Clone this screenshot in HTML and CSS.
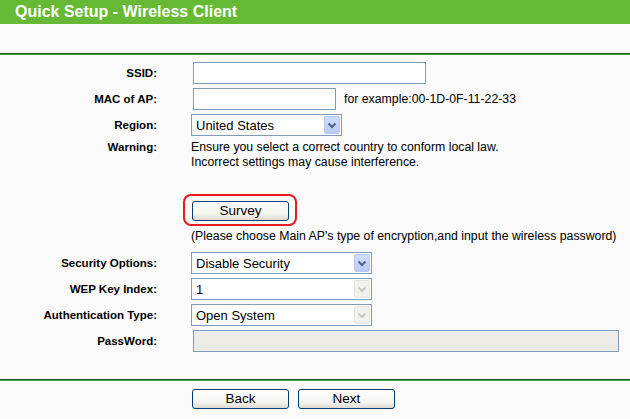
FILE: index.html
```html
<!DOCTYPE html>
<html>
<head>
<meta charset="utf-8">
<link rel="stylesheet" href="styles.css">
</head>
<body>
<div class="header">Quick Setup - Wireless Client</div>
<div class="top-space"></div>
<div class="rule"></div>
<div class="form">
  <div class="row">
    <div class="label">SSID:</div>
    <div class="field"><input class="text ssid" type="text"></div>
  </div>
  <div class="row">
    <div class="label">MAC of AP:</div>
    <div class="field"><input class="text mac" type="text"><span class="hint">for example:00-1D-0F-11-22-33</span></div>
  </div>
  <div class="row">
    <div class="label">Region:</div>
    <div class="field">
      <div class="select region"><span class="value">United States</span><span class="arrow"><svg width="16" height="18" viewBox="0 0 16 18"><path d="M4.5 7.5 L8 11 L11.5 7.5" fill="none" stroke="#4d6185" stroke-width="2"/></svg></span></div>
    </div>
  </div>
  <div class="row warning-row">
    <div class="label">Warning:</div>
    <div class="field warning">Ensure you select a correct country to conform local law.<br>Incorrect settings may cause interference.</div>
  </div>
  <div class="row survey-row">
    <div class="label"></div>
    <div class="field">
      <div class="highlight"><button class="btn">Survey</button></div>
    </div>
  </div>
  <div class="row note-row">
    <div class="label"></div>
    <div class="field note">(Please choose Main AP's type of encryption,and input the wireless password)</div>
  </div>
  <div class="row">
    <div class="label">Security Options:</div>
    <div class="field">
      <div class="select wide"><span class="value">Disable Security</span><span class="arrow"><svg width="16" height="18" viewBox="0 0 16 18"><path d="M4.5 7.5 L8 11 L11.5 7.5" fill="none" stroke="#4d6185" stroke-width="2"/></svg></span></div>
    </div>
  </div>
  <div class="row">
    <div class="label">WEP Key Index:</div>
    <div class="field">
      <div class="select wide"><span class="value">1</span><span class="arrow disabled"><svg width="16" height="18" viewBox="0 0 16 18"><path d="M4.5 7.5 L8 11 L11.5 7.5" fill="none" stroke="#c9c7ba" stroke-width="2"/></svg></span></div>
    </div>
  </div>
  <div class="row">
    <div class="label">Authentication Type:</div>
    <div class="field">
      <div class="select wide"><span class="value">Open System</span><span class="arrow disabled"><svg width="16" height="18" viewBox="0 0 16 18"><path d="M4.5 7.5 L8 11 L11.5 7.5" fill="none" stroke="#c9c7ba" stroke-width="2"/></svg></span></div>
    </div>
  </div>
  <div class="row">
    <div class="label">PassWord:</div>
    <div class="field field-stretch"><input class="text password" type="text" disabled></div>
  </div>
</div>
<div class="rule bottom-rule"></div>
<div class="actions">
  <button class="btn">Back</button>
  <button class="btn">Next</button>
</div>
</body>
</html>
```
FILE: styles.css
```css
html, body {
  margin: 0;
  padding: 0;
  background: #fafafa;
  font-family: "Liberation Sans", Arial, sans-serif;
  color: #000;
}
.header {
  height: 24px;
  line-height: 24px;
  background: #66b934;
  color: #fff;
  font-weight: bold;
  font-size: 16px;
  padding-left: 15px;
}
.top-space {
  height: 29px;
}
.rule {
  height: 0;
  border-top: 1px solid #1f5a3a;
  border-bottom: 1px solid #3f9f55;
}
.form {
  padding-top: 5px;
}
.row {
  display: flex;
  align-items: center;
  height: 26px;
}
.label {
  width: 157px;
  flex: none;
  text-align: right;
  font-weight: bold;
  font-size: 11.5px;
}
.field {
  margin-left: 34px;
  display: flex;
  align-items: center;
  font-size: 12.3px;
  flex: none;
}
.field-stretch {
  flex: 1 1 auto;
  margin-right: 11px;
}
.text {
  box-sizing: border-box;
  height: 22px;
  margin: 0 0 0 2px;
  padding: 0 3px;
  border: 1px solid #7f9db9;
  background: #fff;
  font-family: inherit;
  font-size: 13px;
  flex: none;
}
.ssid { width: 233px; }
.mac { width: 143px; }
.password {
  flex: 1 1 auto;
  width: 100px;
  background: #ecebe5;
}
.hint {
  margin-left: 8px;
  font-size: 12.3px;
}
.select {
  box-sizing: border-box;
  height: 22px;
  border: 1px solid #7f9db9;
  background: #fff;
  display: flex;
  align-items: center;
  justify-content: space-between;
  font-size: 13px;
}
.select .value {
  padding-left: 4px;
}
.region { width: 151px; }
.wide { width: 181px; }
.arrow {
  box-sizing: border-box;
  width: 16px;
  height: 18px;
  margin-right: 1px;
  border: 1px solid #b6c9f5;
  border-radius: 2px;
  background: linear-gradient(#cfdcfd, #b8cbf8);
  display: flex;
}
.arrow svg {
  margin: -1px;
}
.arrow.disabled {
  border-color: #e6e4da;
  background: #f2f1ec;
}
.warning-row {
  height: auto;
  align-items: flex-start;
  padding-top: 2px;
}
.warning-row .label {
  line-height: 15px;
}
.warning {
  line-height: 15px;
  display: block;
}
.survey-row {
  height: auto;
  margin-top: 24px;
}
.highlight {
  margin-left: -8px;
  box-sizing: border-box;
  width: 114px;
  height: 32px;
  border: 2px solid #e81a22;
  border-radius: 8px;
  padding: 5px 0 0 7px;
}
.btn {
  box-sizing: border-box;
  width: 97px;
  height: 20px;
  padding: 0;
  border: 1px solid #003c74;
  border-radius: 3px;
  background: linear-gradient(#ffffff, #f3f3ee 70%, #dcd9cf);
  font-family: inherit;
  font-size: 13.5px;
  color: #000;
  line-height: 18px;
}
.note-row {
  height: auto;
  margin-top: 3px;
}
.note {
  line-height: 15px;
}
.note-row + .row {
  margin-top: 6px;
}
.bottom-rule {
  margin-top: 25px;
}
.actions {
  display: flex;
  gap: 9px;
  padding-left: 192px;
  margin-top: 8px;
}
```
